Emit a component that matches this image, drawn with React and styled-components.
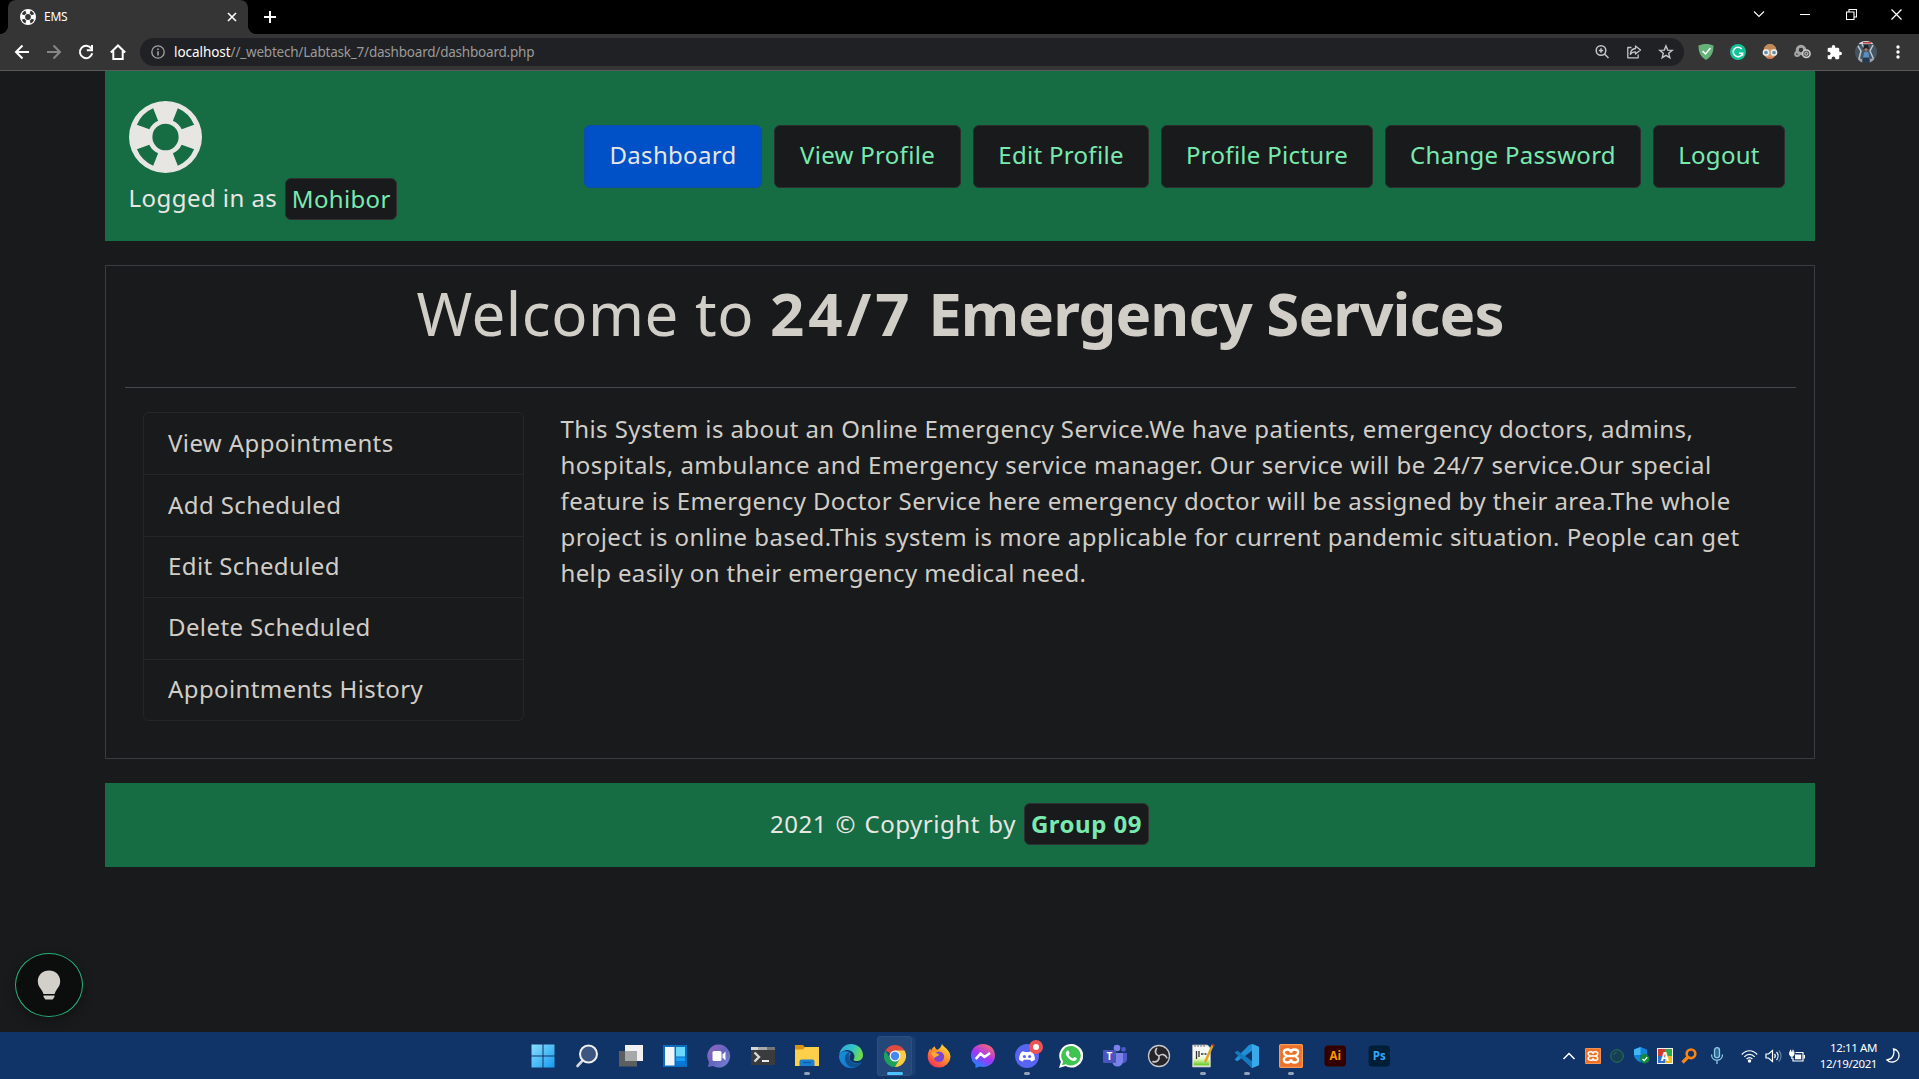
import React from "react";
import styled, { createGlobalStyle, css } from "styled-components";

const GlobalStyle = createGlobalStyle`
  * { box-sizing: border-box; }
  html, body { margin: 0; height: 100%; background: #191a1c; overflow: hidden; }
  body { font-family: "Noto Sans", "Open Sans", sans-serif; color: #d1cdc7; }
  svg { display: block; flex: none; }
  p, h1, ul { margin: 0; padding: 0; }
`;

const Screen = styled.div`
  display: flex;
  flex-direction: column;
  width: 1919px;
  height: 1079px;
  overflow: hidden;
`;

/* ---------- browser chrome ---------- */

const TabStrip = styled.div`
  display: flex;
  flex: none;
  height: 34px;
  padding-left: 8px;
  background: #000;
`;

const Tab = styled.div`
  position: relative;
  display: flex;
  align-items: center;
  width: 240px;
  padding: 0 10px 0 12px;
  background: #353535;
  border-radius: 8px 8px 0 0;
  color: #fff;
  font-size: 12px;
  letter-spacing: -0.25px;

  &::before, &::after {
    content: "";
    position: absolute;
    bottom: 0;
    width: 8px;
    height: 8px;
  }
  &::before { left: -8px; background: radial-gradient(circle at 0 0, #000 7.6px, #353535 8.2px); }
  &::after { right: -8px; background: radial-gradient(circle at 100% 0, #000 7.6px, #353535 8.2px); }
`;

const TabTitle = styled.span`
  flex: 1;
  margin-left: 8px;
  line-height: 16px;
`;

const NewTab = styled.div`
  display: grid;
  place-items: center;
  width: 28px;
  margin-left: 8px;
`;

const WindowButtons = styled.div`
  display: flex;
  margin-left: auto;
`;

const WindowButton = styled.div`
  display: grid;
  place-items: center;
  width: 46px;
  height: 28px;

  &:last-child { width: 45px; }
`;

const Toolbar = styled.div`
  display: flex;
  align-items: center;
  flex: none;
  height: 37px;
  padding: 0 4px 0 6px;
  background: #353535;
  border-bottom: 1px solid #5a5b5d;
`;

const ToolButton = styled.div`
  display: grid;
  place-items: center;
  width: 32px;
  height: 28px;
`;

const AddressBar = styled.div`
  display: flex;
  align-items: center;
  width: 1544px;
  height: 28px;
  margin: 0 6px 0 6px;
  padding: 0 2px 0 11px;
  background: #202124;
  border-radius: 14px;
  font-size: 13.5px;
`;

const Url = styled.div`
  flex: 1;
  margin-left: 9px;
  color: #9a9a9a;
  letter-spacing: -0.21px;
  line-height: 20px;
`;

const UrlHost = styled.span`
  color: #fff;
  letter-spacing: -0.05px;
`;

/* ---------- page ---------- */

const Page = styled.main`
  display: flex;
  flex-direction: column;
  align-items: center;
  flex: 1;
  min-height: 0;
  background: #191a1c;
`;

const Container = styled.div`
  display: flex;
  flex-direction: column;
  width: 1710px;
  gap: 24px;
`;

const Header = styled.header`
  display: flex;
  justify-content: space-between;
  height: 170px;
  padding: 0 30px 0 24px;
  background: #166d43;
`;

const Brand = styled.div`
  display: flex;
  flex-direction: column;
  padding-top: 30px;
  color: #e8e6e3;
  font-size: 24px;
`;

const LoginLine = styled.div`
  display: flex;
  align-items: center;
  height: 42px;
  margin-top: 5px;
`;

const LoginLabel = styled.span`
  padding-bottom: 3px;
  line-height: 36px;
  letter-spacing: 0.45px;
`;

const Chip = styled.span`
  display: grid;
  place-items: center;
  width: ${(p) => p.$width}px;
  height: 42px;
  margin-left: 8px;
  background: #191a1c;
  border: 1px solid #2e3032;
  border-radius: 6px;
  color: #78eab0;
  font-weight: ${(p) => (p.$bold ? 700 : 400)};
  letter-spacing: ${(p) => (p.$bold ? 0.5 : 0.35)}px;
  word-spacing: 0;
  line-height: 40px;
`;

const Nav = styled.nav`
  display: flex;
  gap: 12px;
  padding-top: 54px;
`;

const NavButton = styled.a`
  display: flex;
  justify-content: center;
  width: ${(p) => p.$width}px;
  height: 63px;
  padding-left: 1px;
  border: 1px solid ${(p) => (p.$active ? "#0b4da9" : "#2b2d2f")};
  border-radius: 6px;
  background: ${(p) => (p.$active ? "#0050c8" : "#191a1c")};
  color: ${(p) => (p.$active ? "#e8e6e3" : "#78eab0")};
  font-size: 24px;
  line-height: 57px;
  letter-spacing: 0.3px;
  white-space: nowrap;
`;

const Card = styled.section`
  display: flex;
  flex-direction: column;
  height: 494px;
  padding: 0 18px 0 19px;
  border: 1px solid #3a3e40;
`;

const Title = styled.h1`
  height: 122px;
  padding-top: 11px;
  border-bottom: 1px solid #46494b;
  text-align: center;
  font-size: 60px;
  font-weight: 400;
  line-height: 72px;
  letter-spacing: 0.5px;
  white-space: nowrap;
`;

const TitleStrong = styled.strong`
  font-weight: 700;
  letter-spacing: -0.95px;
`;

const TitleFigures = styled.span`
  letter-spacing: 3.9px;
`;

const Columns = styled.div`
  display: flex;
  gap: 37px;
  padding: 24px 18px 0;
`;

const Menu = styled.ul`
  display: grid;
  grid-template-rows: repeat(5, 1fr);
  width: 381px;
  height: 309px;
  border: 1px solid #252727;
  border-radius: 6px;
  list-style: none;
`;

const MenuItem = styled.li`
  display: flex;
  align-items: center;
  padding: 0 0 2px 24.5px;
  font-size: 24px;
  line-height: 36px;
  letter-spacing: 0.4px;

  & + & { border-top: 1px solid #252727; }
`;

const About = styled.p`
  flex: 1;
  margin-top: -1px;
  font-size: 24px;
  line-height: 36px;
  white-space: nowrap;
`;

const AboutLine = styled.span`
  display: block;
  letter-spacing: ${(p) => p.$spacing}px;
`;

const Footer = styled.footer`
  display: flex;
  align-items: center;
  justify-content: center;
  height: 84px;
  padding-bottom: 2px;
  background: #166d43;
  color: #e8e6e3;
  font-size: 24px;
`;

const FooterText = styled.span`
  padding-bottom: 1px;
  letter-spacing: 0.55px;
  word-spacing: 1.6px;
`;

const HelpButton = styled.button`
  position: absolute;
  left: 15px;
  top: 953px;
  display: grid;
  place-items: center;
  width: 68px;
  height: 64px;
  padding: 0;
  border: 1px solid #27b277;
  border-radius: 50%;
  background: #0c0e0e;
  box-shadow: 0 4px 12px rgba(0, 0, 0, 0.3);
`;

/* ---------- taskbar ---------- */

const Taskbar = styled.div`
  display: flex;
  flex: none;
  height: 47px;
  padding-left: 520.5px;
  background: #103467;
  color: #fff;
`;

const AppSlot = styled.div`
  position: relative;
  display: grid;
  place-items: center;
  width: 44px;
  height: 48px;

  ${(p) => p.$active && css`
    &::before {
      content: "";
      position: absolute;
      inset: 4px 5px 4px 4px;
      border-radius: 4px;
      background: #24477a;
      box-shadow: inset 0 0 0 1px #2d4f80, 4px 0 0 -0.5px #1c3f71;
    }
  `}
  ${(p) => (p.$running || p.$active) && css`
    &::after {
      content: "";
      position: absolute;
      bottom: 5px;
      left: 50%;
      width: ${p.$active ? 16 : 6}px;
      height: 3px;
      transform: translateX(-50%);
      border-radius: 2px;
      background: ${p.$active ? "#4cc2ff" : "#93a2bb"};
    }
  `}
  svg { position: relative; }
`;

const Tray = styled.div`
  display: flex;
  align-items: center;
  margin-left: auto;
  padding-right: 14px;
`;

const TraySlot = styled.div`
  display: grid;
  place-items: center;
  width: ${(p) => p.$width || 24}px;
`;

const TrayGroup = styled.div`
  display: flex;
  align-items: center;
  margin-left: 4px;
`;

const Clock = styled.div`
  width: 68px;
  margin-right: 4px;
  font-size: 11.5px;
  line-height: 16px;
  letter-spacing: -0.4px;
  text-align: right;
`;

/* ---------- drawings ---------- */

const LifeRing = ({ width, height, color }) => (
  <svg width={width} height={height} viewBox="-37 -36 74 72" preserveAspectRatio="none" fill={color} fillRule="evenodd">
    <path d="M-37 0A37 36 0 1 1 37 0A37 36 0 1 1 -37 0Z M-13.3 0A13.3 13.3 0 1 0 13.3 0A13.3 13.3 0 1 0 -13.3 0Z
      M-12.5 -28.7L-7.5 -16.3A18 18 0 0 0 -16.4 -7.7L-29 -12.3A31.4 31 0 0 1 -12.5 -28.7Z
      M12.5 -28.7L7.5 -16.3A18 18 0 0 1 16.4 -7.7L29 -12.3A31.4 31 0 0 0 12.5 -28.7Z
      M-12.5 28.7L-7.5 16.3A18 18 0 0 1 -16.4 7.7L-29 12.3A31.4 31 0 0 0 -12.5 28.7Z
      M12.5 28.7L7.5 16.3A18 18 0 0 0 16.4 7.7L29 12.3A31.4 31 0 0 1 12.5 28.7Z" />
  </svg>
);

const Line = ({ size = 16, color = "#fff", width = 2, d, fill = "none", box = 16 }) => (
  <svg width={size} height={size} viewBox={`0 0 ${box} ${box}`} fill={fill} stroke={color} strokeWidth={width}>
    <path d={d} />
  </svg>
);

const Bulb = () => (
  <svg width="24" height="30" viewBox="0 0 24 30" fill="#d3cfc9">
    <path d="M12 .5C5.500.5.8 5.200.8 11.200c0 3.800 2 6.300 3.700 8.700.9 1.300 1.600 2.500 1.900 4.100h11.200c.3-1.600 1-2.800 1.900-4.100 1.700-2.400 3.700-4.900 3.700-8.700C23.200 5.200 18.500.5 12 .5Z" />
    <path d="M6.500 25.600h11v1.200l-1.800 2.700H8.300l-1.800-2.700Z" />
  </svg>
);

const Star = () => (
  <svg width="16" height="16" viewBox="0 0 16 16" fill="none" stroke="#c4c6c8" strokeWidth="1.4">
    <path d="M8 1.900l1.700 4.200 4.500.3-3.500 2.900 1.100 4.400L8 11.300l-3.800 2.400 1.100-4.400-3.500-2.900 4.500-.3z" />
  </svg>
);

const ZoomIn = () => (
  <svg width="16" height="16" viewBox="0 0 16 16" fill="none" stroke="#c4c6c8" strokeWidth="1.5">
    <circle cx="7" cy="6.500" r="4.800" /><path d="M10.500 10l4 4M7 4.300v4.400M4.800 6.500h4.400" />
  </svg>
);

const Share = () => (
  <svg width="16" height="16" viewBox="0 0 16 16" fill="none" stroke="#c4c6c8" strokeWidth="1.300" strokeLinejoin="round">
    <path d="M5.500 3.500H1.800v10.300h10.400v-3.300M9.500 2l5 4-5 4V7.800c-2.500 0-4 .7-5.200 2.500.3-3.300 2.300-5.500 5.200-5.800z" />
  </svg>
);

const Adguard = () => (
  <svg width="16" height="16" viewBox="0 0 16 16">
    <path d="M8 0c2.500 0 5.500.6 7.500 1.600C15.500 8 14 12.700 8 16 2 12.700.500 8 .500 1.600 2.500.6 5.500 0 8 0Z" fill="#67b279" />
    <path d="M4.500 7l3 3 5-6" fill="none" stroke="#fff" strokeWidth="1.500" />
  </svg>
);

const Grammarly = () => (
  <svg width="16" height="16" viewBox="0 0 16 16">
    <circle cx="8" cy="8" r="8" fill="#15c39a" />
    <path d="M11.600 5A4.700 4.700 0 1 0 12.500 9.200H9M12.600 8.800v3" fill="none" stroke="#fff" strokeWidth="1.500" />
  </svg>
);

const Face = () => (
  <svg width="16" height="16" viewBox="0 0 16 16">
    <ellipse cx="8" cy="7.500" rx="6.500" ry="7.500" fill="#d29a68" />
    <path d="M1.800 5C2.500 2 5 0 8 0s5.500 2 6.200 5z" fill="#c08a58" />
    <circle cx="4" cy="8.500" r="2.600" fill="#5f93a3" stroke="#e9eef0" strokeWidth="1.500" />
    <circle cx="12" cy="8.500" r="2.600" fill="#5f93a3" stroke="#e9eef0" strokeWidth="1.500" />
    <path d="M5.500 13h5l-2.500 2z" fill="#e46d52" />
  </svg>
);

const Circles = () => (
  <svg width="17" height="16" viewBox="0 0 17 16" fill="none" stroke="#a5a5a5">
    <circle cx="7" cy="6" r="3.800" strokeWidth="3" />
    <circle cx="3.200" cy="10" r="2" strokeWidth="2" />
    <circle cx="12.300" cy="9.700" r="3.800" fill="#555" stroke="#cfcfcf" strokeWidth="1.500" />
    <circle cx="12.300" cy="9.700" r="1.500" stroke="#cfcfcf" />
  </svg>
);

const Puzzle = () => (
  <svg width="15" height="15" viewBox="1 1 22 22" fill="#fff">
    <path d="M20.500 11H19V7a2 2 0 0 0-2-2h-4V3.500a2.500 2.500 0 0 0-5 0V5H4a2 2 0 0 0-2 2v3.800h1.500a2.700 2.700 0 0 1 0 5.400H2V20a2 2 0 0 0 2 2h3.800v-1.500a2.700 2.700 0 0 1 5.400 0V22H17a2 2 0 0 0 2-2v-4h1.500a2.500 2.500 0 0 0 0-5z" />
  </svg>
);

const Avatar = () => (
  <svg width="22" height="22" viewBox="0 0 22 22">
    <defs><clipPath id="avatar"><circle cx="11" cy="11" r="11" /></clipPath></defs>
    <g clipPath="url(#avatar)">
      <path fill="#46545f" d="M0 0h22v22H0z" />
      <path d="M4 0h14v3H4z" fill="#d8d9dc" /><path d="M8 1h8v1.500H8z" fill="#c2383c" />
      <path d="M3 5l3 5-2 8M18 4l-3 6 4 9M7 3l2 4" stroke="#b9c6cf" strokeWidth="1.500" fill="none" />
      <path d="M9 4h4l1 4H8z" fill="#1d2226" />
      <circle cx="11" cy="8.500" r="1.600" fill="#a6735c" />
      <path d="M8 17l1-5.500 2-1 2.500 1 .7 5.500z" fill="#5a8fc4" />
      <path d="M8 16.500h6v5.500H8z" fill="#27384e" /><path d="M3 17l4 1v4H3zM15 18l4-1v5h-4z" fill="#99a4ab" />
    </g>
  </svg>
);

const Dots = () => (
  <svg width="16" height="16" viewBox="0 0 16 16" fill="#fff"><circle cx="8" cy="3" r="1.700" /><circle cx="8" cy="8" r="1.700" /><circle cx="8" cy="13" r="1.700" /></svg>
);

const Info = () => (
  <svg width="14" height="14" viewBox="0 0 14 14" fill="none" stroke="#a2a4a7" strokeWidth="1.300">
    <circle cx="7" cy="7" r="6.200" /><path d="M7 6.200v4.200M7 3.500v1.500" strokeWidth="1.600" />
  </svg>
);

const App24 = ({ children }) => <svg width="24" height="24" viewBox="0 0 24 24">{children}</svg>;

const Windows = () => (
  <App24>
    <defs><linearGradient id="win" x2="1" y2="1" gradientUnits="objectBoundingBox"><stop stopColor="#8ae0fc" /><stop offset="1" stopColor="#149af2" /></linearGradient></defs>
    <path d="M.5.500h11v11H.5zM12.500.500h11v11h-11zM.5 12.500h11v11H.5zM12.500 12.500h11v11h-11z" fill="url(#win)" />
  </App24>
);

const Search = () => (
  <App24>
    <path d="M8.500 15.500L2.500 22" stroke="#d4d6da" strokeWidth="2.600" strokeLinecap="round" />
    <circle cx="13.500" cy="10" r="8.500" fill="#3c567f" stroke="#f0f0f2" strokeWidth="2" />
  </App24>
);

const TaskView = () => (
  <App24><path d="M0 7h18v15.500H0z" fill="#5d5e60" /><path d="M6 1h18v16H6z" fill="#f1f1f2" /><path d="M6 7h12v10H6z" fill="#a7a8aa" /></App24>
);

const Widgets = () => (
  <App24>
    <path d="M0 1h24v22H0z" fill="#0b6dbd" /><path d="M2 3h9.500v18.500H2z" fill="#f4f5f7" />
    <path d="M13 3h9v9.500h-9z" fill="#6ad7fb" /><path d="M13 13.500h9v3.500h-9z" fill="#19a0f4" /><path d="M13 17h9v4.500h-9z" fill="#0a78d6" />
  </App24>
);

const Chat = () => (
  <App24>
    <defs><linearGradient id="chat" x2="1" y2="1"><stop stopColor="#9a67c0" /><stop offset=".5" stopColor="#6565bd" /><stop offset="1" stopColor="#7583da" /></linearGradient></defs>
    <path d="M12 .500A11.500 11.500 0 1 1 6 22L1 23l1-5A11.500 11.500 0 0 1 12 .500Z" fill="url(#chat)" />
    <rect x="5.500" y="7" width="9" height="10" rx="1.500" fill="#fff" /><path d="M15.500 10.500L18.500 7.500v9l-3-3z" fill="#fff" />
  </App24>
);

const Terminal = () => (
  <App24>
    <path d="M0 3h24v18H0z" fill="#3a3b3c" /><path d="M0 3h7v3H0z" fill="#d5d5d5" /><path d="M7 3h9v3H7z" fill="#a9a9a9" /><path d="M16 3h8v3h-8z" fill="#777" />
    <path d="M3.500 8.500L8 13l-4.500 4.500" fill="none" stroke="#dadada" strokeWidth="2.400" /><path d="M11 17h7" stroke="#fff" strokeWidth="1.800" />
  </App24>
);

const Explorer = () => (
  <App24>
    <path d="M0 1h8l2.500 3H20v5H0z" fill="#d8960f" /><path d="M0 5.500h8L10 3h14v19H0z" fill="#fcd04b" />
    <path d="M4.500 22v-4.500a2 2 0 0 1 2-2h11a2 2 0 0 1 2 2V22z" fill="#1b7fd2" /><path d="M8 18.500h8" stroke="#0f5da6" strokeWidth="1.300" />
  </App24>
);

const Edge = () => (
  <App24>
    <defs>
      <linearGradient id="edgeTop" x2="1" y2=".3"><stop stopColor="#2aa5e3" /><stop offset=".6" stopColor="#33c5c5" /><stop offset="1" stopColor="#6bdc52" /></linearGradient>
      <linearGradient id="edgeLow" y2="1"><stop stopColor="#1a8fdc" /><stop offset="1" stopColor="#1070c5" /></linearGradient>
    </defs>
    <path d="M0 12a12 12 0 0 0 17 11c2.500-1 4.500-2.700 5.500-4.700-4 2-12 1-12-5 0-1.500.6-2.700 1.500-3.500C9 5.500 1 7 0 12Z" fill="url(#edgeLow)" />
    <path d="M.1 11C1 4.500 6 0 12 0c7 0 12 5.300 12 11 0 4-3 6-6.500 6-3 0-3.500-1.300-2.500-2.300C17 10 12.500 6 8.500 6 4.500 6 1 8.500.1 11Z" fill="url(#edgeTop)" />
    <path d="M6 14c0-3 2-5.500 5-6-1 1.500-1.500 3.500-1 6 .8 4.500 6 7.300 12.300 4.500-2 4-7 5.300-10.300 4.500C8.500 22 6 18 6 14Z" fill="#12508f" />
  </App24>
);

const Chrome = () => (
  <svg width="22" height="22" viewBox="0 0 24 24">
    <path d="M12 12L1.600 6A12 12 0 0 1 22.400 6z" fill="#dd4b3e" />
    <path d="M12 12V6h10.400A12 12 0 0 1 12 24z" fill="#fdcc44" />
    <path d="M1.600 6L6.800 15 12 18l5.200-3L12 24A12 12 0 0 1 1.600 6z" fill="#1da15f" />
    <circle cx="12" cy="12" r="6" fill="#f5f7fa" /><circle cx="12" cy="12" r="4.600" fill="#4688f1" />
  </svg>
);

const Firefox = () => (
  <App24>
    <defs><linearGradient id="fox" x1=".9" y1="0" x2=".2" y2="1"><stop stopColor="#ffe746" /><stop offset=".45" stopColor="#ff9a27" /><stop offset="1" stopColor="#f5295a" /></linearGradient></defs>
    <path d="M15 0c1 3 8.500 5.500 8.500 13A11.300 11.300 0 0 1 12 23.500C5 23.500.7 18.500.7 12.500c0-3 1-6 2.500-8 .3 1 .6 1.500 1 2C5 4.500 6.500 3 8 2.300c0 1.700.5 2.700 2 3.500C12 5.500 14 3 15 0Z" fill="url(#fox)" />
    <circle cx="12" cy="12.800" r="5.200" fill="#7d43d8" /><path d="M4.500 9c2-1.500 4-.500 6 .6 1.500.8 2 .4 1.500 1.400-1.500 2-4 1-4 3-1 0-3-2-3.500-5Z" fill="#ffac35" />
  </App24>
);

const Messenger = () => (
  <App24>
    <defs><linearGradient id="msg" x1=".2" y1="1" x2=".8" y2="0"><stop stopColor="#138cff" /><stop offset=".5" stopColor="#a334fa" /><stop offset="1" stopColor="#ff6b66" /></linearGradient></defs>
    <path d="M12 0c7 0 12 5 12 11.600S19 23 12 23c-1.300 0-2.500-.2-3.500-.5L4.500 24v-3.500A11.300 11.300 0 0 1 0 11.600C0 5 5 0 12 0Z" fill="url(#msg)" />
    <path d="M4.800 15l4.700-5.500 4 3.500 5.500-4" fill="none" stroke="#fff" strokeWidth="2.600" strokeLinejoin="round" />
  </App24>
);

const Discord = () => (
  <svg width="32" height="32" viewBox="-4 -4 32 32">
    <circle cx="12" cy="12" r="12" fill="#5865f2" />
    <path d="M8 7.200l2 .8h4l2-.8c2.500.8 3.800 4.500 4 8.300-1.300 1.200-2.600 1.700-3.800 1.900l-1-1.700H8.800l-1 1.700C6.600 17.200 5.300 16.700 4 15.500c.2-3.800 1.500-7.500 4-8.300Z" fill="#fff" />
    <circle cx="9.400" cy="12.600" r="1.500" fill="#5865f2" /><circle cx="14.600" cy="12.600" r="1.500" fill="#5865f2" />
    <circle cx="21" cy="3" r="7" fill="#ee5253" /><circle cx="21" cy="3" r="3" fill="#fff" />
  </svg>
);

const WhatsApp = () => (
  <App24>
    <path d="M12.200 0A11.800 11.800 0 1 1 6.500 22L0 24l1.900-6.300A11.800 11.800 0 0 1 12.200 0Z" fill="#fff" />
    <path d="M12.200 2A9.800 9.800 0 1 1 7 20.300L3 21.300l1.100-3.900A9.800 9.800 0 0 1 12.200 2Z" fill="#3fc351" />
    <path d="M8.500 6.500c.6-.2 1 0 1.200.5l.8 2c.2.500-.9 1.500-.7 1.800 1 1.700 2.200 2.800 4 3.600.500.200 1.200-1.500 1.700-1.300l2.100 1c.6.300-.2 2.600-2 2.800-4 .4-8.700-4.300-8.900-7.600 0-1.200.8-2.300 1.800-2.800Z" fill="#fff" />
  </App24>
);

const IconText = styled.text`
  font-family: "Open Sans", "Noto Sans", sans-serif;
  font-weight: 700;
`;

const Teams = () => (
  <App24>
    <circle cx="14" cy="4" r="3.300" fill="#7b83eb" /><circle cx="20.500" cy="5.300" r="2.400" fill="#5059c9" />
    <path d="M17 9h7v6a4 4 0 0 1-5 4z" fill="#5059c9" /><path d="M9 9h11v8a5.500 5.500 0 0 1-11 0z" fill="#7b83eb" />
    <rect x="0" y="6" width="13" height="13" rx="1" fill="#4b53bc" /><IconText x="6.500" y="16.200" textAnchor="middle" fontSize="10" fill="#fff">T</IconText>
  </App24>
);

const Obs = () => (
  <App24>
    <circle cx="12" cy="12" r="10.500" fill="#262427" stroke="#c8c6c8" strokeWidth="1.300" />
    <path d="M12 12C8.500 11 7.500 7.500 9.500 4.500M12 12c2.500-2.500 6.500-1.800 7.800 1.800M12 12c.8 3.800-2 6.500-6 5.700" fill="none" stroke="#c8c6c8" strokeWidth="1.700" strokeLinecap="round" />
  </App24>
);

const Notepad = () => (
  <App24>
    <defs><linearGradient id="npp" x2="0" y2="1"><stop stopColor="#fff" /><stop offset=".45" stopColor="#e4f7bd" /><stop offset="1" stopColor="#5fc71a" /></linearGradient></defs>
    <path d="M1.500 1h15l3 3v19h-18z" fill="#f5f7f3" stroke="#a9aaaa" strokeWidth=".8" /><path d="M2.500 10h16v11.500h-16z" fill="url(#npp)" />
    <path d="M4 1v2M7 1v2M10 1v2M13 1v2" stroke="#777" />
    <path d="M5.500 7v8M8 7v6M10 10h2.500M13.500 10h2" stroke="#333" strokeWidth="1.300" />
    <path d="M21.500 1.500L15.500 15l-1.500 3" stroke="#e0a21b" strokeWidth="2.400" fill="none" /><path d="M20.500 0l3 1.500" stroke="#b33" strokeWidth="1.500" />
  </App24>
);

const VsCode = () => (
  <App24>
    <path d="M17 0l6 2.500v19L17 24 6.500 14 2.500 17.200 0 16v-1l14-14z" fill="#1f8fd8" />
    <path d="M0 8l2.500-1.300L17.500 18v6L0 9z" fill="#1479bf" /><path d="M17 0l7 2.700v18.600L17 24z" fill="#3aa9ec" />
    <path d="M17 6.700v10.600L10 12z" fill="#103467" />
  </App24>
);

const Xampp = ({ size = 24 }) => (
  <svg width={size} height={size} viewBox="0 0 24 24">
    <rect width="24" height="24" rx="1.500" fill="#ed7126" /><rect x=".7" y=".7" width="22.600" height="22.600" rx="1" fill="none" stroke="#f7a56c" />
    <path d="M12 8.800C12 6.500 10.500 5.500 8.500 5.500S4.800 6.700 4.800 8.500 6.500 11 8 12C6.500 13 4.800 13.700 4.800 15.500S6.500 18.500 8.500 18.500 12 17.500 12 15.200C12 17.500 13.500 18.500 15.500 18.500S19.200 17.300 19.200 15.500 17.500 13 16 12C17.500 11 19.200 10.300 19.200 8.500S17.500 5.500 15.500 5.500 12 6.500 12 8.800ZM8.500 12h7" fill="none" stroke="#fff" strokeWidth="2.300" />
  </svg>
);

const Adobe = ({ bg, color, children }) => (
  <App24><rect x="1.500" y="1.500" width="21.500" height="21" rx="3.500" fill={bg} /><IconText x="12.300" y="15.800" textAnchor="middle" fontSize="11.500" fill={color}>{children}</IconText></App24>
);

const Shield = () => (
  <svg width="17" height="17" viewBox="0 0 17 17">
    <path d="M7.500 0L14 2.500V8c0 3-3 6-6.500 7.500C4 14 1 11 1 8V2.500z" fill="#1583d8" /><path d="M7.500 0v8H1V2.500z" fill="#42b7f3" /><path d="M7.500 8H14c0 3-3 6-6.500 7.500z" fill="#0a5fae" />
    <circle cx="11.800" cy="11.800" r="4.700" fill="#108a3c" /><path d="M9.500 12l1.700 1.600 3-3.300" stroke="#fff" strokeWidth="1.300" fill="none" />
  </svg>
);

const LetterA = () => (
  <svg width="16" height="16" viewBox="0 0 16 16">
    <path d="M0 0h16v16H0z" fill="#f2f2f2" /><path d="M1 1h7v7H1z" fill="#cc3b2c" /><path d="M8 1h7v7H8z" fill="#2fa84a" /><path d="M1 8h7v7H1z" fill="#2c6fc4" /><path d="M8 8h7v7H8z" fill="#f0b81d" />
    <IconText x="8" y="12.500" textAnchor="middle" fontSize="12" fill="#fff">A</IconText>
  </svg>
);

const Mic = () => (
  <svg width="14" height="17" viewBox="0 0 14 17" fill="none" stroke="#8ecbe8" strokeWidth="1.300">
    <rect x="4.500" y=".7" width="5" height="10" rx="2.500" fill="#2f6c94" /><path d="M1.500 7.500c0 7.500 11 7.500 11 0M7 13.200V17" />
  </svg>
);

const Wifi = () => (
  <svg width="17" height="14" viewBox="0 0 17 14" fill="none" stroke="#fff" strokeWidth="1.200">
    <path d="M.8 5.500c4.400-5 11-5 15.400 0M3.300 7.800c3-3.300 7.400-3.300 10.400 0M5.600 10c1.800-1.900 4-1.900 5.800 0" /><circle cx="8.500" cy="12" r="1.100" fill="#fff" />
  </svg>
);

const Volume = () => (
  <svg width="17" height="14" viewBox="0 0 17 14" fill="none" stroke="#fff" strokeWidth="1.200">
    <path d="M1 5h2.500L7.500 1.500v11L3.500 9H1zM9.500 5c1 1.200 1 2.800 0 4M11.500 3c2 2.300 2 5.700 0 8" /><path d="M13.800 1.500c3 3.200 3 7.800 0 11" stroke="#6a80a3" />
  </svg>
);

const Battery = () => (
  <svg width="16" height="14" viewBox="0 0 16 14" fill="none" stroke="#fff" strokeWidth="1.200">
    <path d="M6.500 3.500H14V12H4V9" /><path d="M6 5.500h6.200v4.800H6z" fill="#fff" stroke="none" /><path d="M15.300 6v3.500" strokeWidth="1.400" /><path d="M.8 3h4v2.500L3.800 7h-2l-1-1.500z" fill="#fff" /><path d="M1.600 3V.8M4 3V.8M2.900 7v3" />
  </svg>
);

/* ---------- data ---------- */

const NAV = [
  { label: "Dashboard", width: 178, active: true },
  { label: "View Profile", width: 187 },
  { label: "Edit Profile", width: 176 },
  { label: "Profile Picture", width: 212 },
  { label: "Change Password", width: 256 },
  { label: "Logout", width: 132 },
];

const MENU = ["View Appointments", "Add Scheduled", "Edit Scheduled", "Delete Scheduled", "Appointments History"];

const ABOUT = [
  ["This System is about an Online Emergency Service.We have patients, emergency doctors, admins,", 0.41],
  ["hospitals, ambulance and Emergency service manager. Our service will be 24/7 service.Our special", 0.51],
  ["feature is Emergency Doctor Service here emergency doctor will be assigned by their area.The whole", 0.4],
  ["project is online based.This system is more applicable for current pandemic situation. People can get", 0.48],
  ["help easily on their emergency medical need.", 0.37],
];

const APPS = [
  { icon: <Windows /> }, { icon: <Search /> }, { icon: <TaskView /> }, { icon: <Widgets /> }, { icon: <Chat /> }, { icon: <Terminal /> },
  { icon: <Explorer />, running: true }, { icon: <Edge /> }, { icon: <Chrome />, active: true }, { icon: <Firefox /> }, { icon: <Messenger /> },
  { icon: <Discord />, running: true }, { icon: <WhatsApp /> }, { icon: <Teams /> }, { icon: <Obs /> }, { icon: <Notepad />, running: true },
  { icon: <VsCode />, running: true }, { icon: <Xampp />, running: true },
  { icon: <Adobe bg="#330000" color="#ff9a00">Ai</Adobe> }, { icon: <Adobe bg="#001e36" color="#31a8ff">Ps</Adobe> },
];

export default function App() {
  return (
    <Screen>
      <GlobalStyle />
      <TabStrip>
        <Tab>
          <LifeRing width={16} height={16} color="#fff" />
          <TabTitle>EMS</TabTitle>
          <Line size={12} box={12} width={1.6} d="M2 2l8 8M10 2l-8 8" />
        </Tab>
        <NewTab><Line size={14} box={14} d="M7 1v12M1 7h12" /></NewTab>
        <WindowButtons>
          <WindowButton><Line size={12} box={12} width={1.1} d="M1 3.500l5 5 5-5" /></WindowButton>
          <WindowButton><Line size={10} box={10} width={1} d="M0 5.500h10" /></WindowButton>
          <WindowButton><Line size={11} box={11} width={1.100} d="M.5 3h7.500v7.500H.5zM3 3V.5h7.500V8H8" /></WindowButton>
          <WindowButton><Line size={11} box={11} width={1.300} d="M.5.5l10 10M10.500.5l-10 10" /></WindowButton>
        </WindowButtons>
      </TabStrip>

      <Toolbar>
        <ToolButton><Line d="M15 8H2.500M8.500 1.500L2 8l6.500 6.500" /></ToolButton>
        <ToolButton><Line color="#868686" d="M1 8h12.500M7.500 1.500L14 8l-6.500 6.500" /></ToolButton>
        <ToolButton><Line d="M13.300 4.500A6.200 6.200 0 1 0 14.200 9.300M14 1v5.200H8.800" /></ToolButton>
        <ToolButton><Line d="M.8 8.500L8 1.500l7.200 7M3.300 7v8h9.400V7" /></ToolButton>
        <AddressBar>
          <Info />
          <Url><UrlHost>localhost</UrlHost>//_webtech/Labtask_7/dashboard/dashboard.php</Url>
          <ToolButton><ZoomIn /></ToolButton>
          <ToolButton><Share /></ToolButton>
          <ToolButton><Star /></ToolButton>
        </AddressBar>
        <ToolButton><Adguard /></ToolButton>
        <ToolButton><Grammarly /></ToolButton>
        <ToolButton><Face /></ToolButton>
        <ToolButton><Circles /></ToolButton>
        <ToolButton><Puzzle /></ToolButton>
        <ToolButton><Avatar /></ToolButton>
        <ToolButton><Dots /></ToolButton>
      </Toolbar>

      <Page>
        <Container>
          <Header>
            <Brand>
              <LifeRing width={73} height={72} color="#e8e6e3" />
              <LoginLine>
                <LoginLabel>Logged in as</LoginLabel>
                <Chip $width={112}>Mohibor</Chip>
              </LoginLine>
            </Brand>
            <Nav>
              {NAV.map((item) => (
                <NavButton key={item.label} $width={item.width} $active={item.active}>{item.label}</NavButton>
              ))}
            </Nav>
          </Header>

          <Card>
            <Title>Welcome to <TitleStrong><TitleFigures>24/7</TitleFigures> Emergency Services</TitleStrong></Title>
            <Columns>
              <Menu>{MENU.map((label) => <MenuItem key={label}>{label}</MenuItem>)}</Menu>
              <About>
                {ABOUT.map(([text, spacing]) => <AboutLine key={text} $spacing={spacing}>{text} </AboutLine>)}
              </About>
            </Columns>
          </Card>

          <Footer>
            <FooterText>2021 © Copyright by</FooterText>
            <Chip $width={125} $bold>Group 09</Chip>
          </Footer>
        </Container>
        <HelpButton><Bulb /></HelpButton>
      </Page>

      <Taskbar>
        {APPS.map((app, i) => <AppSlot key={i} $running={app.running} $active={app.active}>{app.icon}</AppSlot>)}
        <Tray>
          <TraySlot><Line size={14} box={14} width={1.500} d="M1.500 10L7 4.500 12.500 10" /></TraySlot>
          <TraySlot><Xampp size={16} /></TraySlot>
          <TraySlot>
            <svg width="14" height="14" viewBox="0 0 14 14" fill="#173f52" stroke="#2b7750"><circle cx="7" cy="7" r="6.300" /><path d="M3.500 6a4 4 0 0 1 3-2.500" /></svg>
          </TraySlot>
          <TraySlot><Shield /></TraySlot>
          <TraySlot><LetterA /></TraySlot>
          <TraySlot>
            <svg width="16" height="16" viewBox="0 0 16 16" fill="none" stroke="#ff8412" strokeWidth="2.600"><circle cx="10" cy="5.800" r="4.300" /><path d="M7 9l-5.500 5.500" strokeWidth="3.200" /></svg>
          </TraySlot>
          <TraySlot $width={32}><Mic /></TraySlot>
          <TrayGroup>
            <TraySlot><Wifi /></TraySlot>
            <TraySlot><Volume /></TraySlot>
            <TraySlot><Battery /></TraySlot>
          </TrayGroup>
          <Clock>12:11 AM<br />12/19/2021</Clock>
          <TraySlot>
            <svg width="14" height="15" viewBox="0 0 14 15" fill="none" stroke="#fff" strokeWidth="1.300"><path d="M7.500 1C11 1.500 13.300 4.500 13 8c-.5 5.500-8 8.200-12 4C6 11.500 9 7 7.500 1Z" /></svg>
          </TraySlot>
        </Tray>
      </Taskbar>
    </Screen>
  );
}
